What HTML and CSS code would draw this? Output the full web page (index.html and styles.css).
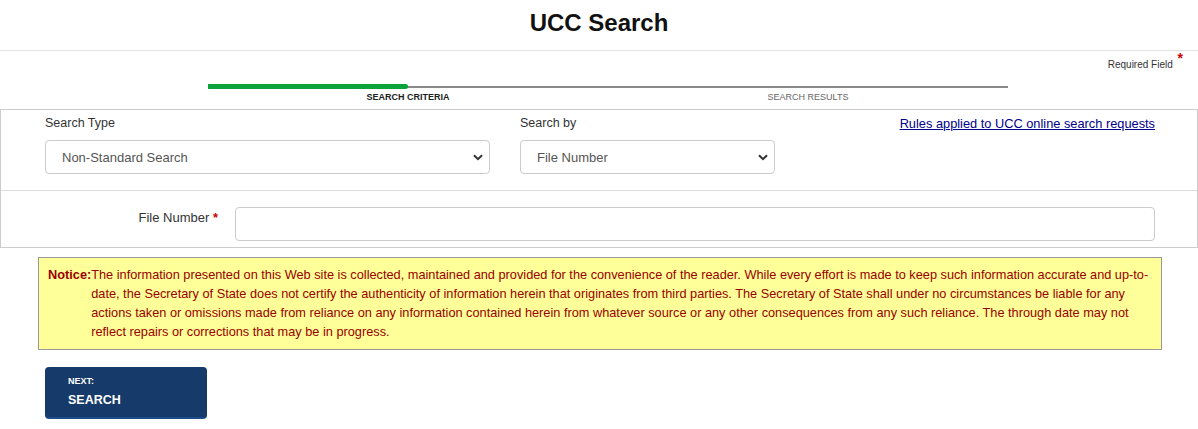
FILE: index.html
```html
<!DOCTYPE html>
<html lang="en">
<head>
<meta charset="utf-8">
<title>UCC Search</title>
<link rel="stylesheet" href="styles.css">
</head>
<body>
<h1 class="page-title">UCC Search</h1>

<div class="progress-area">
  <div class="required">Required Field <span class="req-star">*</span></div>
  <div class="stepper">
    <div class="track"><div class="track-fill"></div></div>
    <div class="step-labels">
      <span class="step-label step-active">SEARCH CRITERIA</span>
      <span class="step-label">SEARCH RESULTS</span>
    </div>
  </div>
</div>

<div class="form-box">
  <div class="form-row-top">
    <div class="field field-type">
      <label class="field-label">Search Type</label>
      <select class="select">
        <option>Non-Standard Search</option>
      </select>
    </div>
    <div class="field field-by">
      <label class="field-label">Search by</label>
      <select class="select">
        <option>File Number</option>
      </select>
    </div>
    <a class="rules-link" href="#">Rules applied to UCC online search requests</a>
  </div>
  <div class="form-row-bottom">
    <label class="file-label">File Number <span class="req-mark">*</span></label>
    <input class="text-input" type="text">
  </div>
</div>

<div class="notice">
  <span class="notice-title">Notice:</span>
  <p class="notice-text">The information presented on this Web site is collected, maintained and provided for the convenience of the reader. While every effort is made to keep such information accurate and up-to-date, the Secretary of State does not certify the authenticity of information herein that originates from third parties. The Secretary of State shall under no circumstances be liable for any actions taken or omissions made from reliance on any information contained herein from whatever source or any other consequences from any such reliance. The through date may not reflect repairs or corrections that may be in progress.</p>
</div>

<button class="next-btn" type="button">
  <span class="next-small">NEXT:</span>
  <span class="next-big">SEARCH</span>
</button>
</body>
</html>
```

FILE: styles.css
```css
* { box-sizing: border-box; }

body {
  margin: 0;
  font-family: "Liberation Sans", Arial, sans-serif;
  color: #333;
  background: #fff;
}

.page-title {
  margin: 0;
  height: 51px;
  line-height: 46px;
  font-size: 24px;
  font-weight: bold;
  text-align: center;
  color: #111;
  border-bottom: 1px solid #e3e3e3;
}

.progress-area {
  height: 58px;
  display: flex;
  flex-direction: column;
}

.required {
  align-self: flex-end;
  margin: 7px 15px 0 0;
  font-size: 10px;
  line-height: 12px;
  color: #333;
}

.req-star {
  color: #c00;
  font-size: 14px;
  font-weight: bold;
  vertical-align: 5px;
  line-height: 0;
  margin-left: 2px;
}

.stepper {
  width: 800px;
  margin: 15px 0 0 208px;
}

.track {
  height: 2px;
  background: #8a8a8a;
  position: relative;
}

.track-fill {
  position: absolute;
  left: 0;
  top: -2px;
  width: 200px;
  height: 5px;
  background: #0ca33a;
  border-radius: 0 3px 3px 0;
}

.step-labels {
  display: grid;
  grid-template-columns: 1fr 1fr;
  margin-top: 4px;
}

.step-label {
  text-align: center;
  font-size: 9px;
  line-height: 10px;
  color: #666;
}

.step-active {
  color: #222;
  font-weight: bold;
}

.form-box {
  border: 1px solid #ccc;
}

.form-row-top {
  display: flex;
  align-items: flex-start;
  padding: 5px 42px 16px 44px;
  border-bottom: 1px solid #ddd;
}

.field {
  display: flex;
  flex-direction: column;
}

.field-type { width: 445px; }
.field-by { width: 255px; margin-left: 30px; }

.field-label {
  font-size: 12.5px;
  line-height: 17px;
  color: #333;
  margin-bottom: 8px;
}

.select {
  appearance: none;
  -webkit-appearance: none;
  height: 34px;
  padding: 0 30px 0 16px;
  font-family: "Liberation Sans", Arial, sans-serif;
  font-size: 13px;
  color: #555;
  background-color: #fff;
  background-image: url("data:image/svg+xml;utf8,<svg xmlns='http://www.w3.org/2000/svg' width='10' height='7' viewBox='0 0 10 7'><path d='M1 1.2 L5 5.2 L9 1.2' fill='none' stroke='%23333' stroke-width='2'/></svg>");
  background-repeat: no-repeat;
  background-position: right 6px center;
  border: 1px solid #ccc;
  border-radius: 4px;
}

.rules-link {
  margin-left: auto;
  font-size: 12.8px;
  line-height: 17px;
  color: #00008b;
  text-decoration: underline;
}

.form-row-bottom {
  display: flex;
  align-items: flex-start;
  padding: 16px 42px 6px 0;
}

.file-label {
  width: 217px;
  margin-top: 2px;
  text-align: right;
  font-size: 13px;
  line-height: 17px;
  color: #333;
  margin-right: 17px;
}

.req-mark {
  color: #c00;
  font-weight: bold;
}

.text-input {
  flex: 1;
  height: 34px;
  border: 1px solid #ccc;
  border-radius: 4px;
  background: #fff;
}

.notice {
  display: flex;
  margin: 9px 36px 0 38px;
  padding: 7px 9px 8px 9px;
  background: #ffff99;
  border: 1px solid #999;
  color: #990000;
  font-size: 12.75px;
  line-height: 19px;
}

.notice-title {
  font-weight: bold;
  flex: none;
}

.notice-text {
  margin: 0;
}

.next-btn {
  display: flex;
  flex-direction: column;
  align-items: flex-start;
  margin: 17px 0 0 45px;
  width: 162px;
  height: 52px;
  padding: 8px 0 0 23px;
  background: #163a69;
  border: none;
  border-bottom: 2px solid #1d4c89;
  border-radius: 4px;
  color: #fff;
  font-family: "Liberation Sans", Arial, sans-serif;
  font-weight: bold;
  cursor: pointer;
}

.next-small {
  font-size: 9px;
  line-height: 13px;
}

.next-big {
  font-size: 12.5px;
  line-height: 24px;
}
```
